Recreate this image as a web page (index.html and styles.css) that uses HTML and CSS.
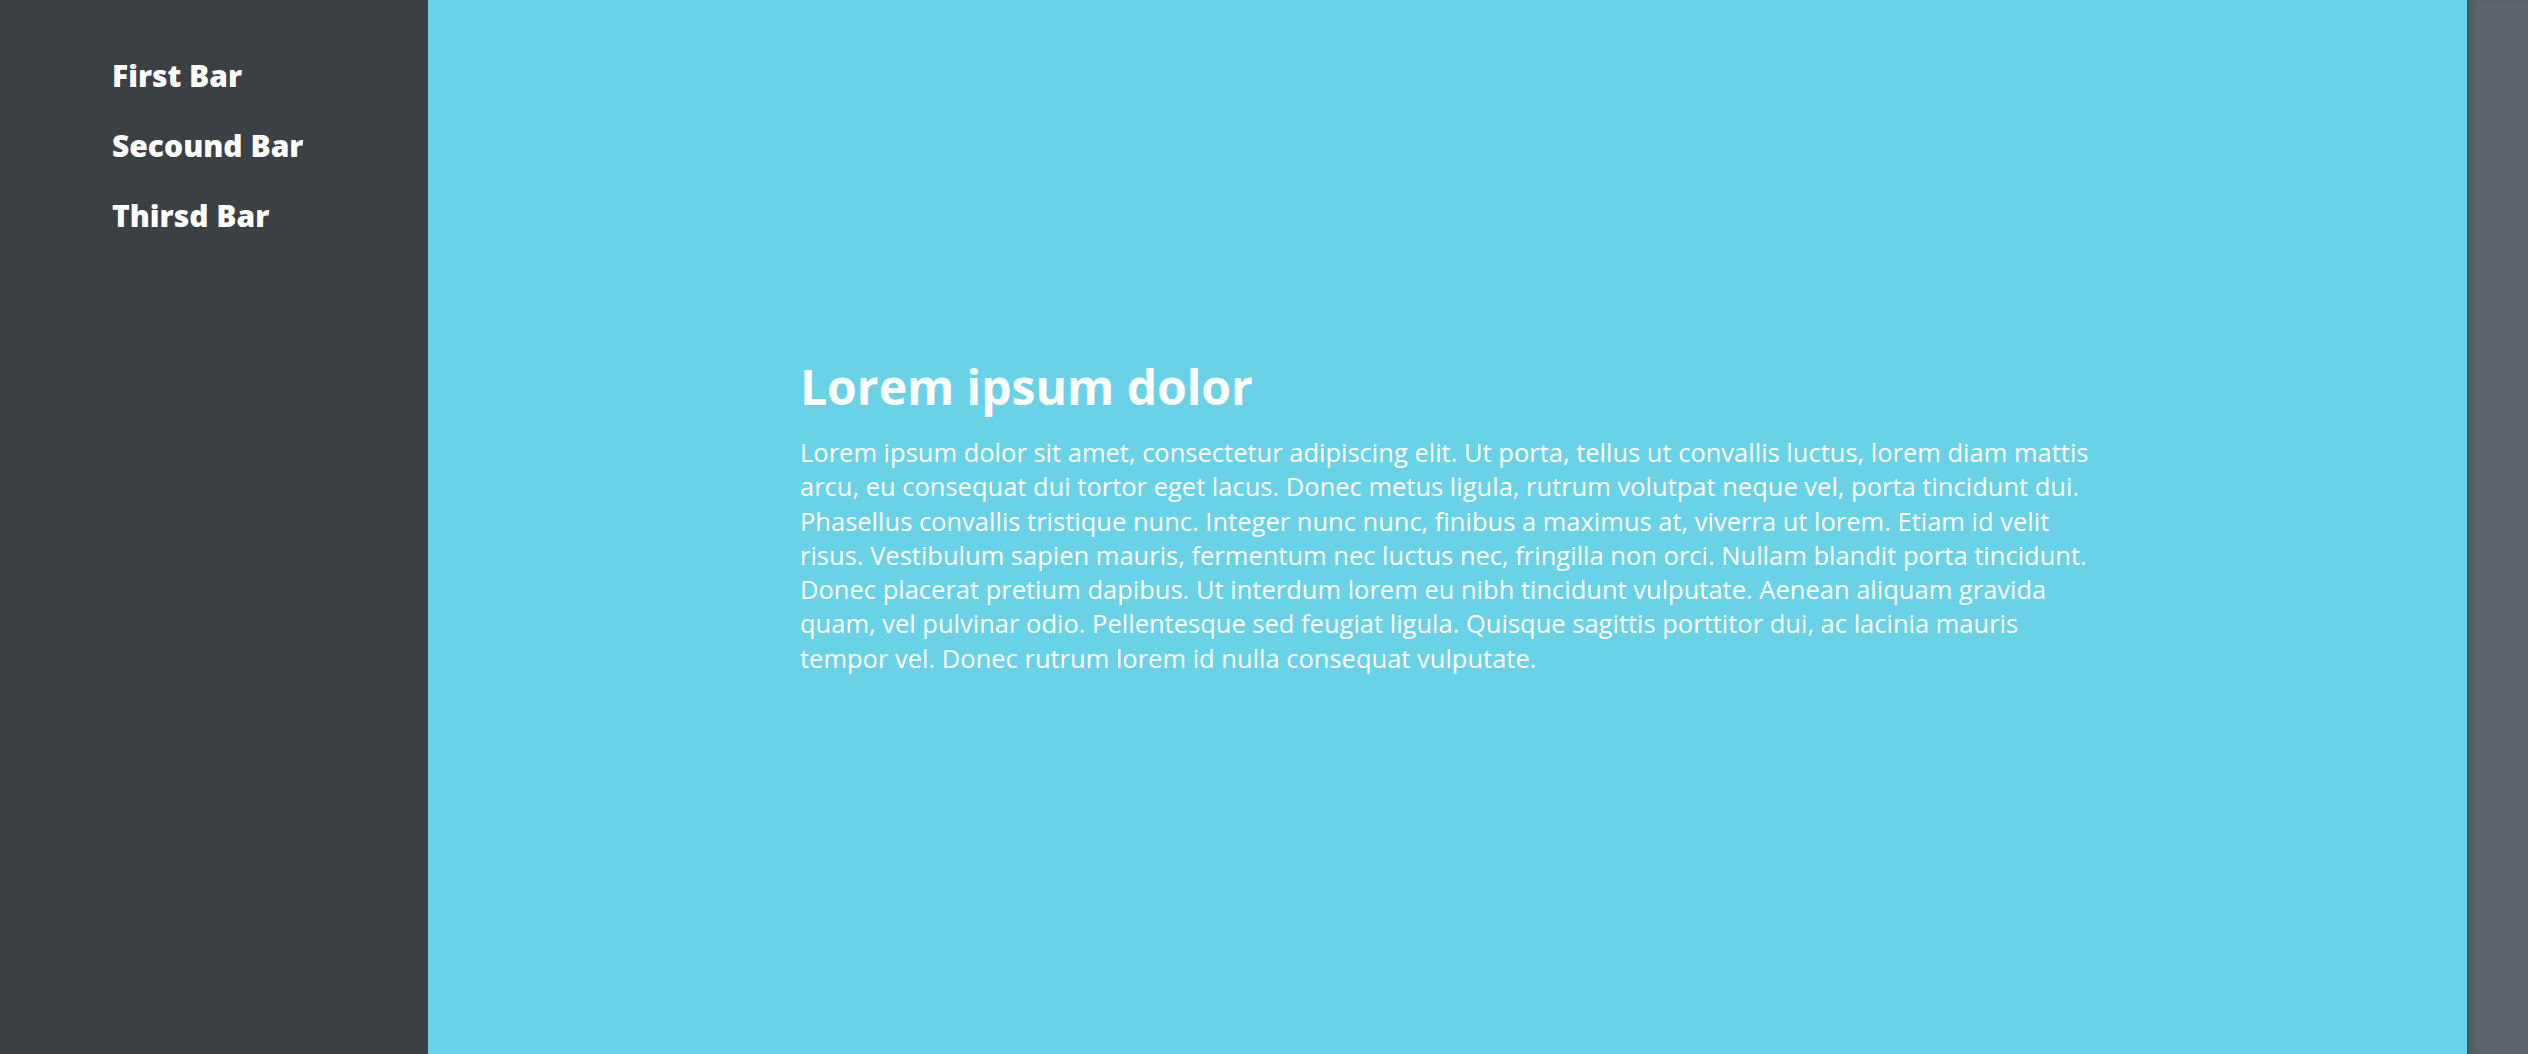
FILE: index.html
```html
<!DOCTYPE html>
<html lang="en">
<head>
<meta charset="utf-8">
<title>Bars</title>
<link rel="stylesheet" href="styles.css">
</head>
<body>
<div class="layout">
  <aside class="sidebar">
    <nav class="nav">
      <a class="nav-link" href="#">First Bar</a>
      <a class="nav-link" href="#">Secound Bar</a>
      <a class="nav-link" href="#">Thirsd Bar</a>
    </nav>
  </aside>
  <main class="main">
    <article class="content">
      <h1 class="title">Lorem ipsum dolor</h1>
      <p class="text">Lorem ipsum dolor sit amet, consectetur adipiscing elit. Ut porta, tellus ut convallis luctus, lorem diam mattis arcu, eu consequat dui tortor eget lacus. Donec metus ligula, rutrum volutpat neque vel, porta tincidunt dui. Phasellus convallis tristique nunc. Integer nunc nunc, finibus a maximus at, viverra ut lorem. Etiam id velit risus. Vestibulum sapien mauris, fermentum nec luctus nec, fringilla non orci. Nullam blandit porta tincidunt. Donec placerat pretium dapibus. Ut interdum lorem eu nibh tincidunt vulputate. Aenean aliquam gravida quam, vel pulvinar odio. Pellentesque sed feugiat ligula. Quisque sagittis porttitor dui, ac lacinia mauris tempor vel. Donec rutrum lorem id nulla consequat vulputate.</p>
    </article>
  </main>
  <div class="edge"></div>
</div>
</body>
</html>
```
FILE: styles.css
```css
html, body {
  margin: 0;
  padding: 0;
  height: 100%;
}
body {
  font-family: "Open Sans", "Noto Sans", sans-serif;
  color: #ffffff;
  overflow: hidden;
}
.layout {
  display: flex;
  height: 1054px;
}
.sidebar {
  width: 428px;
  flex: 0 0 428px;
  background: #3b4045;
}
.nav {
  display: flex;
  flex-direction: column;
  padding: 41px 0 0 112px;
}
.nav-link {
  color: #ffffff;
  text-decoration: none;
  font-weight: 800;
  font-size: 30px;
  line-height: 70px;
}
.main {
  flex: 1;
  background: #69d2e7;
  padding-top: 354px;
}
.content {
  width: 1300px;
  margin-left: 372px;
}
.title {
  margin: 0 0 16px 0;
  font-size: 48px;
  font-weight: 700;
  line-height: 65px;
}
.text {
  margin: 0;
  font-size: 25.5px;
  line-height: 34.3px;
}
.edge {
  width: 61px;
  flex: 0 0 61px;
  background: #5c646d;
  box-shadow: inset 8px 0 8px -5px rgba(0, 0, 0, 0.25);
}
```
